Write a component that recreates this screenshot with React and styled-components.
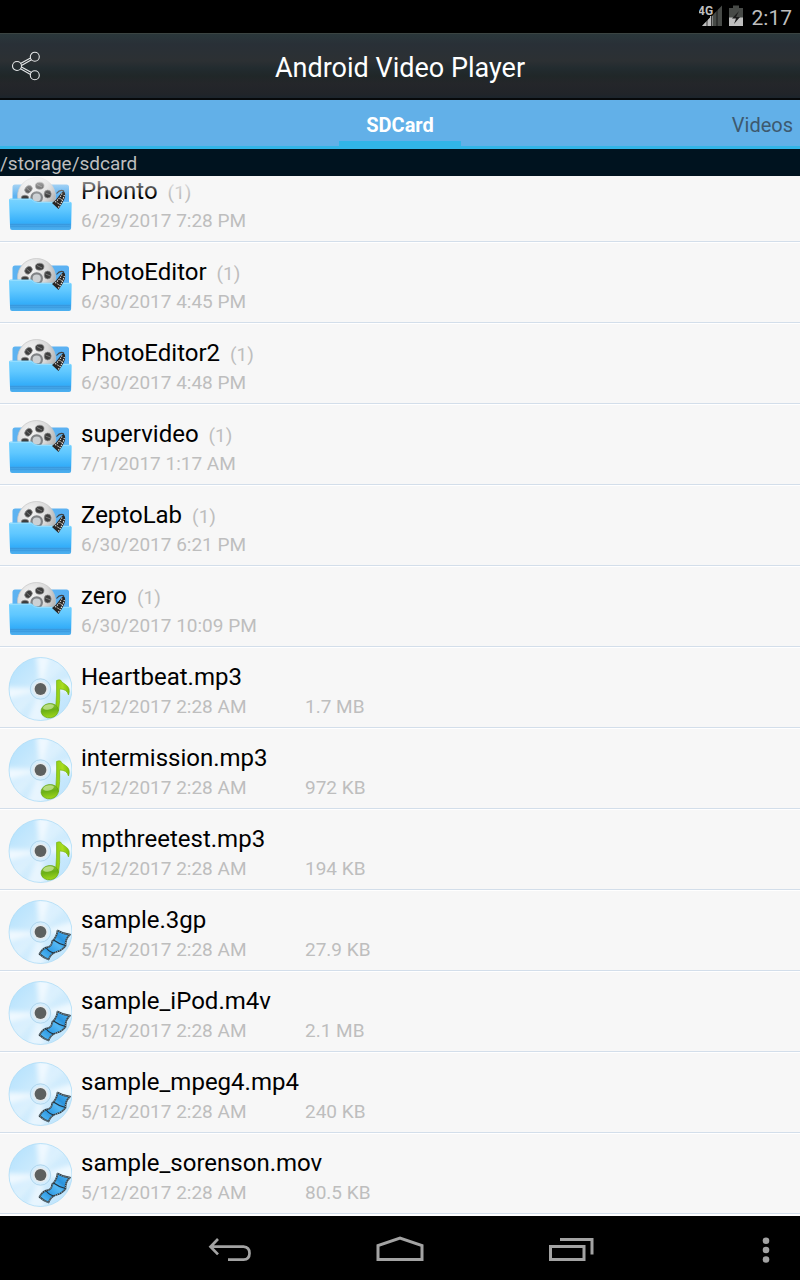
import React, { useLayoutEffect, useRef } from "react";
import styled, { createGlobalStyle } from "styled-components";

const GlobalStyle = createGlobalStyle`
  * { box-sizing: border-box; }
  body { margin: 0; background: #000; font-family: Roboto, "Liberation Sans", sans-serif; }
  button { font: inherit; border: 0; padding: 0; background: none; color: inherit; cursor: pointer; }
  svg { display: block; }
`;

const Screen = styled.div`
  display: flex;
  flex-direction: column;
  height: 100vh;
  background: #000;
`;

const StatusBar = styled.div`
  display: flex;
  justify-content: flex-end;
  align-items: center;
  flex: none;
  height: 33px;
  padding: 1px 8px 0 0;
  color: #bebebe;
  font-size: 21px;
  line-height: 24px;
`;

const Clock = styled.time`
  padding-top: 2px;
`;

const StatusIcons = styled.svg`
  width: 46px;
  height: 24px;
  margin-right: 7px;
`;

const ActionBar = styled.header`
  display: grid;
  grid-template-columns: 1fr auto 1fr;
  align-items: center;
  flex: none;
  height: 67px;
  padding: 0 10px;
  border-top: 1px solid #3b4442;
  border-bottom: 2px solid #07090b;
  background: linear-gradient(#2a373b 0%, #293037 16%, #2c3033 42%, #222b2f 54%, #202728 66%, #24262a 78%, #212429 94%, #1b242c 100%);
  color: #fff;
`;

const ShareButton = styled.button`
  width: 32px;
  height: 32px;
`;

const Title = styled.h1`
  margin: 0;
  padding-top: 4px;
  font-size: 27px;
  font-weight: 400;
  line-height: 32px;
`;

const Tabs = styled.nav`
  display: grid;
  grid-template-columns: 1fr 122px 1fr;
  flex: none;
  height: 49px;
  background: #62b0e8;
  box-shadow: inset 0 -3px #31b5e8;
`;

const Tab = styled.button`
  grid-column: ${(p) => (p.$active ? 2 : 3)};
  justify-self: ${(p) => (p.$active ? "stretch" : "end")};
  padding: ${(p) => (p.$active ? "0" : "0 7px")};
  color: ${(p) => (p.$active ? "#fff" : "#3d596f")};
  font-size: 20px;
  font-weight: ${(p) => (p.$active ? 700 : 400)};
  line-height: 24px;
  box-shadow: ${(p) => (p.$active ? "inset 0 -8px #31b5e8" : "none")};
`;

const PathBar = styled.div`
  flex: none;
  height: 27px;
  padding-top: 1px;
  background: #00131f;
  color: #bebebe;
  font-size: 19px;
  line-height: 28px;
`;

const ListFrame = styled.main`
  position: relative;
  flex: 1;
  min-height: 0;
  background: #fff;

  &::before {
    content: "";
    position: absolute;
    z-index: 1;
    inset: 0 0 auto 0;
    height: 20px;
    background: linear-gradient(rgba(247, 247, 247, 0.8), rgba(247, 247, 247, 0));
    pointer-events: none;
  }
`;

const List = styled.ul`
  height: 100%;
  margin: 0;
  padding: 0 0 1px;
  overflow-y: auto;
  scrollbar-width: none;
  list-style: none;
`;

const Row = styled.li`
  display: flex;
  height: 81px;
  padding: 9px 8px 0;
  gap: 9px;
  background: #f7f7f7;
  border-bottom: 1px solid #fff;
  box-shadow: inset 0 -1px #d3deea;
`;

const Thumb = styled.svg`
  flex: none;
  width: 64px;
  height: 64px;
`;

const Info = styled.div`
  flex: 1;
  min-width: 0;
  padding-top: 4px;
`;

const Name = styled.div`
  color: #000;
  font-size: 24px;
  line-height: 32px;
  white-space: nowrap;
`;

const Count = styled.span`
  margin-left: 10px;
  color: #bebebe;
  font-size: 19px;
  line-height: 20px;
`;

const Meta = styled.div`
  display: grid;
  grid-template-columns: 224px 1fr;
  color: #bebebe;
  font-size: 19px;
  line-height: 28px;
`;

const NavBar = styled.footer`
  display: grid;
  grid-template-columns: 1fr 170px 170px 170px 1fr;
  align-items: center;
  flex: none;
  height: 64px;
  color: #a3a3a3;
`;

const NavButton = styled.button`
  display: flex;
  justify-content: center;
  height: 48px;
  align-items: center;
  grid-column: ${(p) => p.$column};
`;

const MenuButton = styled(NavButton)`
  justify-content: flex-end;
  padding-right: 28px;
`;

const PaintSheet = styled.svg`
  position: absolute;
  width: 0;
  height: 0;
`;

function SharedPaint() {
  return (
    <PaintSheet aria-hidden="true">
      <defs>
        <linearGradient id="folderFront" x1="0" y1="0" x2="0" y2="1">
          <stop offset="0" stopColor="#7ad4ff" />
          <stop offset=".35" stopColor="#60c8ff" />
          <stop offset=".78" stopColor="#33adf9" />
          <stop offset=".82" stopColor="#3f9fe3" />
          <stop offset="1" stopColor="#4cb1f1" />
        </linearGradient>
        <linearGradient id="folderBack" x1="0" y1="0" x2="1" y2="1">
          <stop offset="0" stopColor="#5fb3f0" />
          <stop offset="1" stopColor="#57b0f5" />
        </linearGradient>
        <radialGradient id="reelMetal" cx=".35" cy=".3" r=".75">
          <stop offset="0" stopColor="#f4f4f4" />
          <stop offset=".6" stopColor="#dadada" />
          <stop offset="1" stopColor="#a9a9a9" />
        </radialGradient>
        <linearGradient id="discBase" x1="0" y1="0" x2="1" y2="1">
          <stop offset="0" stopColor="#b0e0fd" />
          <stop offset=".5" stopColor="#d3edfd" />
          <stop offset="1" stopColor="#bae2fc" />
        </linearGradient>
        <clipPath id="discEdge">
          <circle cx="32.500" cy="32" r="31.500" />
        </clipPath>
        <filter id="discSheen" x="-20%" y="-20%" width="140%" height="140%">
          <feGaussianBlur stdDeviation="2.500" />
        </filter>
        <linearGradient id="noteGreen" x1="0" y1="0" x2="1" y2="0">
          <stop offset="0" stopColor="#8ccb10" />
          <stop offset=".5" stopColor="#a9dc20" />
          <stop offset="1" stopColor="#7cbd05" />
        </linearGradient>
        <linearGradient id="noteHead" x1="0" y1="0" x2="0" y2="1">
          <stop offset="0" stopColor="#8cc63c" />
          <stop offset=".45" stopColor="#6bb016" />
          <stop offset="1" stopColor="#a0d81c" />
        </linearGradient>
        <linearGradient id="filmBlue" x1="0" y1="1" x2="1" y2="0">
          <stop offset="0" stopColor="#63c5fa" />
          <stop offset=".3" stopColor="#2f9ae3" />
          <stop offset=".55" stopColor="#55b9f5" />
          <stop offset=".7" stopColor="#2b93dd" />
          <stop offset="1" stopColor="#51b8f5" />
        </linearGradient>
      </defs>
    </PaintSheet>
  );
}

function FolderIcon() {
  return (
    <Thumb viewBox="0 0 64 64" aria-hidden="true">
      <path d="M4.500 16q0-2.500 2.500-2.500h51.500q2.500 0 2.500 2.500v24h-56.500z" fill="url(#folderBack)" />
      <circle cx="28.500" cy="25.500" r="19" fill="url(#reelMetal)" stroke="#c4c4c4" strokeWidth=".7" />
      <g fill="#3d3d3d" stroke="#8d8d8d" strokeWidth=".7">
        <ellipse cx="20.500" cy="18.200" rx="3.300" ry="4.200" transform="rotate(40 20.500 18.200)" />
        <ellipse cx="31.700" cy="14.700" rx="4.300" ry="3.500" />
        <ellipse cx="39.700" cy="23" rx="3.500" ry="4" />
        <ellipse cx="17" cy="27" rx="3.800" ry="2.800" />
      </g>
      <path d="M18.500 17l4 3.500M29 13.500l5 2.500M37.500 22l5 2" stroke="#858585" strokeWidth=".8" />
      <circle cx="28.700" cy="26.500" r="5.200" fill="#ccd0d3" stroke="#808386" strokeWidth="2.200" />
      <path d="M1 29q0-1.500 1.500-1.500h21q3 3.300 6 3.300h32.500q1.700 0 1.700 1.700l-.6 24.500q0 2-2 2h-57q-2 0-2-2z" fill="url(#folderFront)" />
      <path d="M2 28.500h21.500q3 3 6 3h33" fill="none" stroke="#9be0ff" strokeWidth=".8" />
      <path d="M2.300 53.500h59.500M2.300 55.500h59.500" stroke="#2384cf" strokeOpacity=".35" strokeWidth=".7" />
      <path d="M48.500 22.500q3.500-4.500 7.500-2.500" fill="none" stroke="#404244" strokeWidth="1.200" />
      <path d="M55.500 20q2.200 1 1.500 6-1 4-6.500 12l-6.500-6q3.500-2 6.500-6.500 2.500-4 5-5.500z" fill="#292522" />
      <path d="M54 22.500q-2 5-8 9.500M56.300 24q-1 5-6 12.500" fill="none" stroke="#f1f1f1" strokeWidth="1.100" strokeDasharray="1.300 1.200" />
      <path d="M52 27.500l2.500 1.500M48.700 31.500l2.800 1.700" stroke="#a7a39d" strokeWidth="1" />
    </Thumb>
  );
}

function Disc({ children }) {
  return (
    <Thumb viewBox="0 0 64 64" aria-hidden="true">
      <circle cx="32.500" cy="32" r="31.500" fill="url(#discBase)" />
      <g clipPath="url(#discEdge)">
        <g filter="url(#discSheen)" fill="#f7fcff">
          <path d="M32.500 32L28-2h15z" opacity=".85" />
          <path d="M32.500 32L43-2l14 8z" opacity=".3" />
          <path d="M32.500 32L-2 30v13z" opacity=".85" />
          <path d="M32.500 32L-2 43l10 17z" opacity=".25" />
          <path d="M32.500 32L67 20v16z" opacity=".8" />
          <path d="M32.500 32L18 66h20z" opacity=".65" />
        </g>
      </g>
      <circle cx="32.500" cy="32" r="31.500" fill="none" stroke="#a8daf6" strokeWidth=".7" />
      <circle cx="32.500" cy="32" r="10.200" fill="#d5edfc" stroke="#a5cfea" strokeWidth=".8" />
      <circle cx="32.500" cy="32" r="7.500" fill="#e6ebee" />
      <circle cx="32.500" cy="32" r="5.900" fill="#5d605f" />
      {children}
    </Thumb>
  );
}

function MusicIcon() {
  return (
    <Disc>
      <path d="M48.500 23.500q2-1 4-.5 1 2.500 5 4.500 5.500 3.500 3 10.500-1.500-6-8.800-6 .5 12-1.200 22l-3-1q1.500-15 1-29.500z" fill="url(#noteGreen)" stroke="#6fae0d" strokeWidth=".6" />
      <ellipse cx="41.700" cy="53.700" rx="8.700" ry="7.200" transform="rotate(-8 41.700 53.700)" fill="url(#noteHead)" stroke="#5f9f0c" strokeWidth=".6" />
      <ellipse cx="40.500" cy="50" rx="5.500" ry="2.500" transform="rotate(-12 40.500 50)" fill="#d5edae" opacity=".65" />
    </Disc>
  );
}

function VideoIcon() {
  const film = "M49.500 30.500Q55 34 62 34.500 57 39 57.500 46 53 51 49.500 51.500 43 53 40.500 59.500 36 58 31.500 54 34 49 38 47.500 44 47 44 41.500 49 37 49.500 30.500Z";
  return (
    <Disc>
      <path d={film} fill="url(#filmBlue)" stroke="#303c43" strokeWidth="1.700" strokeLinejoin="round" />
      <path d={film} fill="none" stroke="#bdd9e6" strokeWidth=".9" strokeDasharray=".9 1.300" />
      <path d="M45.500 40Q51 44 57.500 45.500M38 47.500Q41 52 46 53" fill="none" stroke="#1f3443" strokeWidth="1.200" />
    </Disc>
  );
}

const icons = { folder: FolderIcon, music: MusicIcon, video: VideoIcon };

const entries = [
  { kind: "folder", name: "Phonto", count: 1, date: "6/29/2017 7:28 PM" },
  { kind: "folder", name: "PhotoEditor", count: 1, date: "6/30/2017 4:45 PM" },
  { kind: "folder", name: "PhotoEditor2", count: 1, date: "6/30/2017 4:48 PM" },
  { kind: "folder", name: "supervideo", count: 1, date: "7/1/2017 1:17 AM" },
  { kind: "folder", name: "ZeptoLab", count: 1, date: "6/30/2017 6:21 PM" },
  { kind: "folder", name: "zero", count: 1, date: "6/30/2017 10:09 PM" },
  { kind: "music", name: "Heartbeat.mp3", date: "5/12/2017 2:28 AM", size: "1.7 MB" },
  { kind: "music", name: "intermission.mp3", date: "5/12/2017 2:28 AM", size: "972 KB" },
  { kind: "music", name: "mpthreetest.mp3", date: "5/12/2017 2:28 AM", size: "194 KB" },
  { kind: "video", name: "sample.3gp", date: "5/12/2017 2:28 AM", size: "27.9 KB" },
  { kind: "video", name: "sample_iPod.m4v", date: "5/12/2017 2:28 AM", size: "2.1 MB" },
  { kind: "video", name: "sample_mpeg4.mp4", date: "5/12/2017 2:28 AM", size: "240 KB" },
  { kind: "video", name: "sample_sorenson.mov", date: "5/12/2017 2:28 AM", size: "80.5 KB" },
];

function Entry({ kind, name, count, date, size }) {
  const Icon = icons[kind];
  return (
    <Row>
      <Icon />
      <Info>
        <Name>
          {name}
          {count && <Count>({count})</Count>}
        </Name>
        <Meta>
          <span>{date}</span>
          <span>{size}</span>
        </Meta>
      </Info>
    </Row>
  );
}

export default function App() {
  const listRef = useRef(null);

  // The file list opens at its last entry.
  useLayoutEffect(() => {
    listRef.current.scrollTop = listRef.current.scrollHeight;
  }, []);

  return (
    <Screen>
      <GlobalStyle />
      <SharedPaint />
      <StatusBar>
        <StatusIcons viewBox="0 0 46 24" aria-label="4G signal, battery charging">
          <path d="M23 .5v20.500H3z" fill="#474a47" />
          <path d="M12 11.500v9.500H3z" fill="#bebebe" />
          <path d="M11 11h2.500v10H11z" fill="#bebebe" />
          <path d="M8 13v8M12.500 9v12M18 4v17" stroke="#000" strokeWidth="1" strokeOpacity=".7" />
          <text x="-1" y="10" fontSize="12" fontWeight="700" fill="#bebebe" stroke="#000" strokeWidth="2" paintOrder="stroke" fontFamily="Roboto, sans-serif">4G</text>
          <path d="M30 3h4V.500h6V3h4v18H30z" fill="#474a47" />
          <path d="M30 12.500h14v8.500H30z" fill="#bebebe" />
          <path d="M40 6l-7 7.500h4l-2 5.500 6-7h-4z" fill="#1c1c1c" />
        </StatusIcons>
        <Clock>2:17</Clock>
      </StatusBar>
      <ActionBar>
        <ShareButton aria-label="Share">
          <svg width="32" height="32" viewBox="0 0 32 32" fill="none" stroke="#e5e7e8" strokeWidth="1.100">
            <path d="M10.500 13.500L20.500 8M11.500 15.500L21.500 9.800M11.500 17L21.500 22.500M10.500 18.800L20.500 24.500" />
            <circle cx="7" cy="16" r="4.500" />
            <circle cx="24.800" cy="6.800" r="4.500" />
            <circle cx="24.800" cy="25.200" r="4.500" />
          </svg>
        </ShareButton>
        <Title>Android Video Player</Title>
      </ActionBar>
      <Tabs>
        <Tab $active>SDCard</Tab>
        <Tab>Videos</Tab>
      </Tabs>
      <PathBar>/storage/sdcard</PathBar>
      <ListFrame>
        <List ref={listRef}>
          {entries.map((entry) => (
            <Entry key={entry.name} {...entry} />
          ))}
        </List>
      </ListFrame>
      <NavBar>
        <NavButton $column={2} aria-label="Back">
          <svg width="48" height="32" viewBox="0 0 48 32" fill="none" stroke="currentColor" strokeWidth="2.700">
            <path d="M22 27.700h15.500q6-.3 6-6.500t-6-6.500H4.500M12 7l-7.500 7.700 7.500 7.700" />
          </svg>
        </NavButton>
        <NavButton $column={3} aria-label="Home">
          <svg width="48" height="32" viewBox="0 0 48 32" fill="none" stroke="currentColor" strokeWidth="3">
            <path d="M2 27.500V13.500L24 6l22 7.500v14z" />
          </svg>
        </NavButton>
        <NavButton $column={4} aria-label="Recent apps">
          <svg width="48" height="32" viewBox="0 0 48 32" fill="none" stroke="currentColor" strokeWidth="3">
            <path d="M4.500 14.500h33.500v13H4.500zM14 7.500h32v15" />
          </svg>
        </NavButton>
        <MenuButton $column={5} aria-label="Menu">
          <svg width="12" height="32" viewBox="0 0 12 32" fill="currentColor">
            <circle cx="6" cy="8.700" r="3.300" />
            <circle cx="6" cy="18" r="3.300" />
            <circle cx="6" cy="27.500" r="3.300" />
          </svg>
        </MenuButton>
      </NavBar>
    </Screen>
  );
}
